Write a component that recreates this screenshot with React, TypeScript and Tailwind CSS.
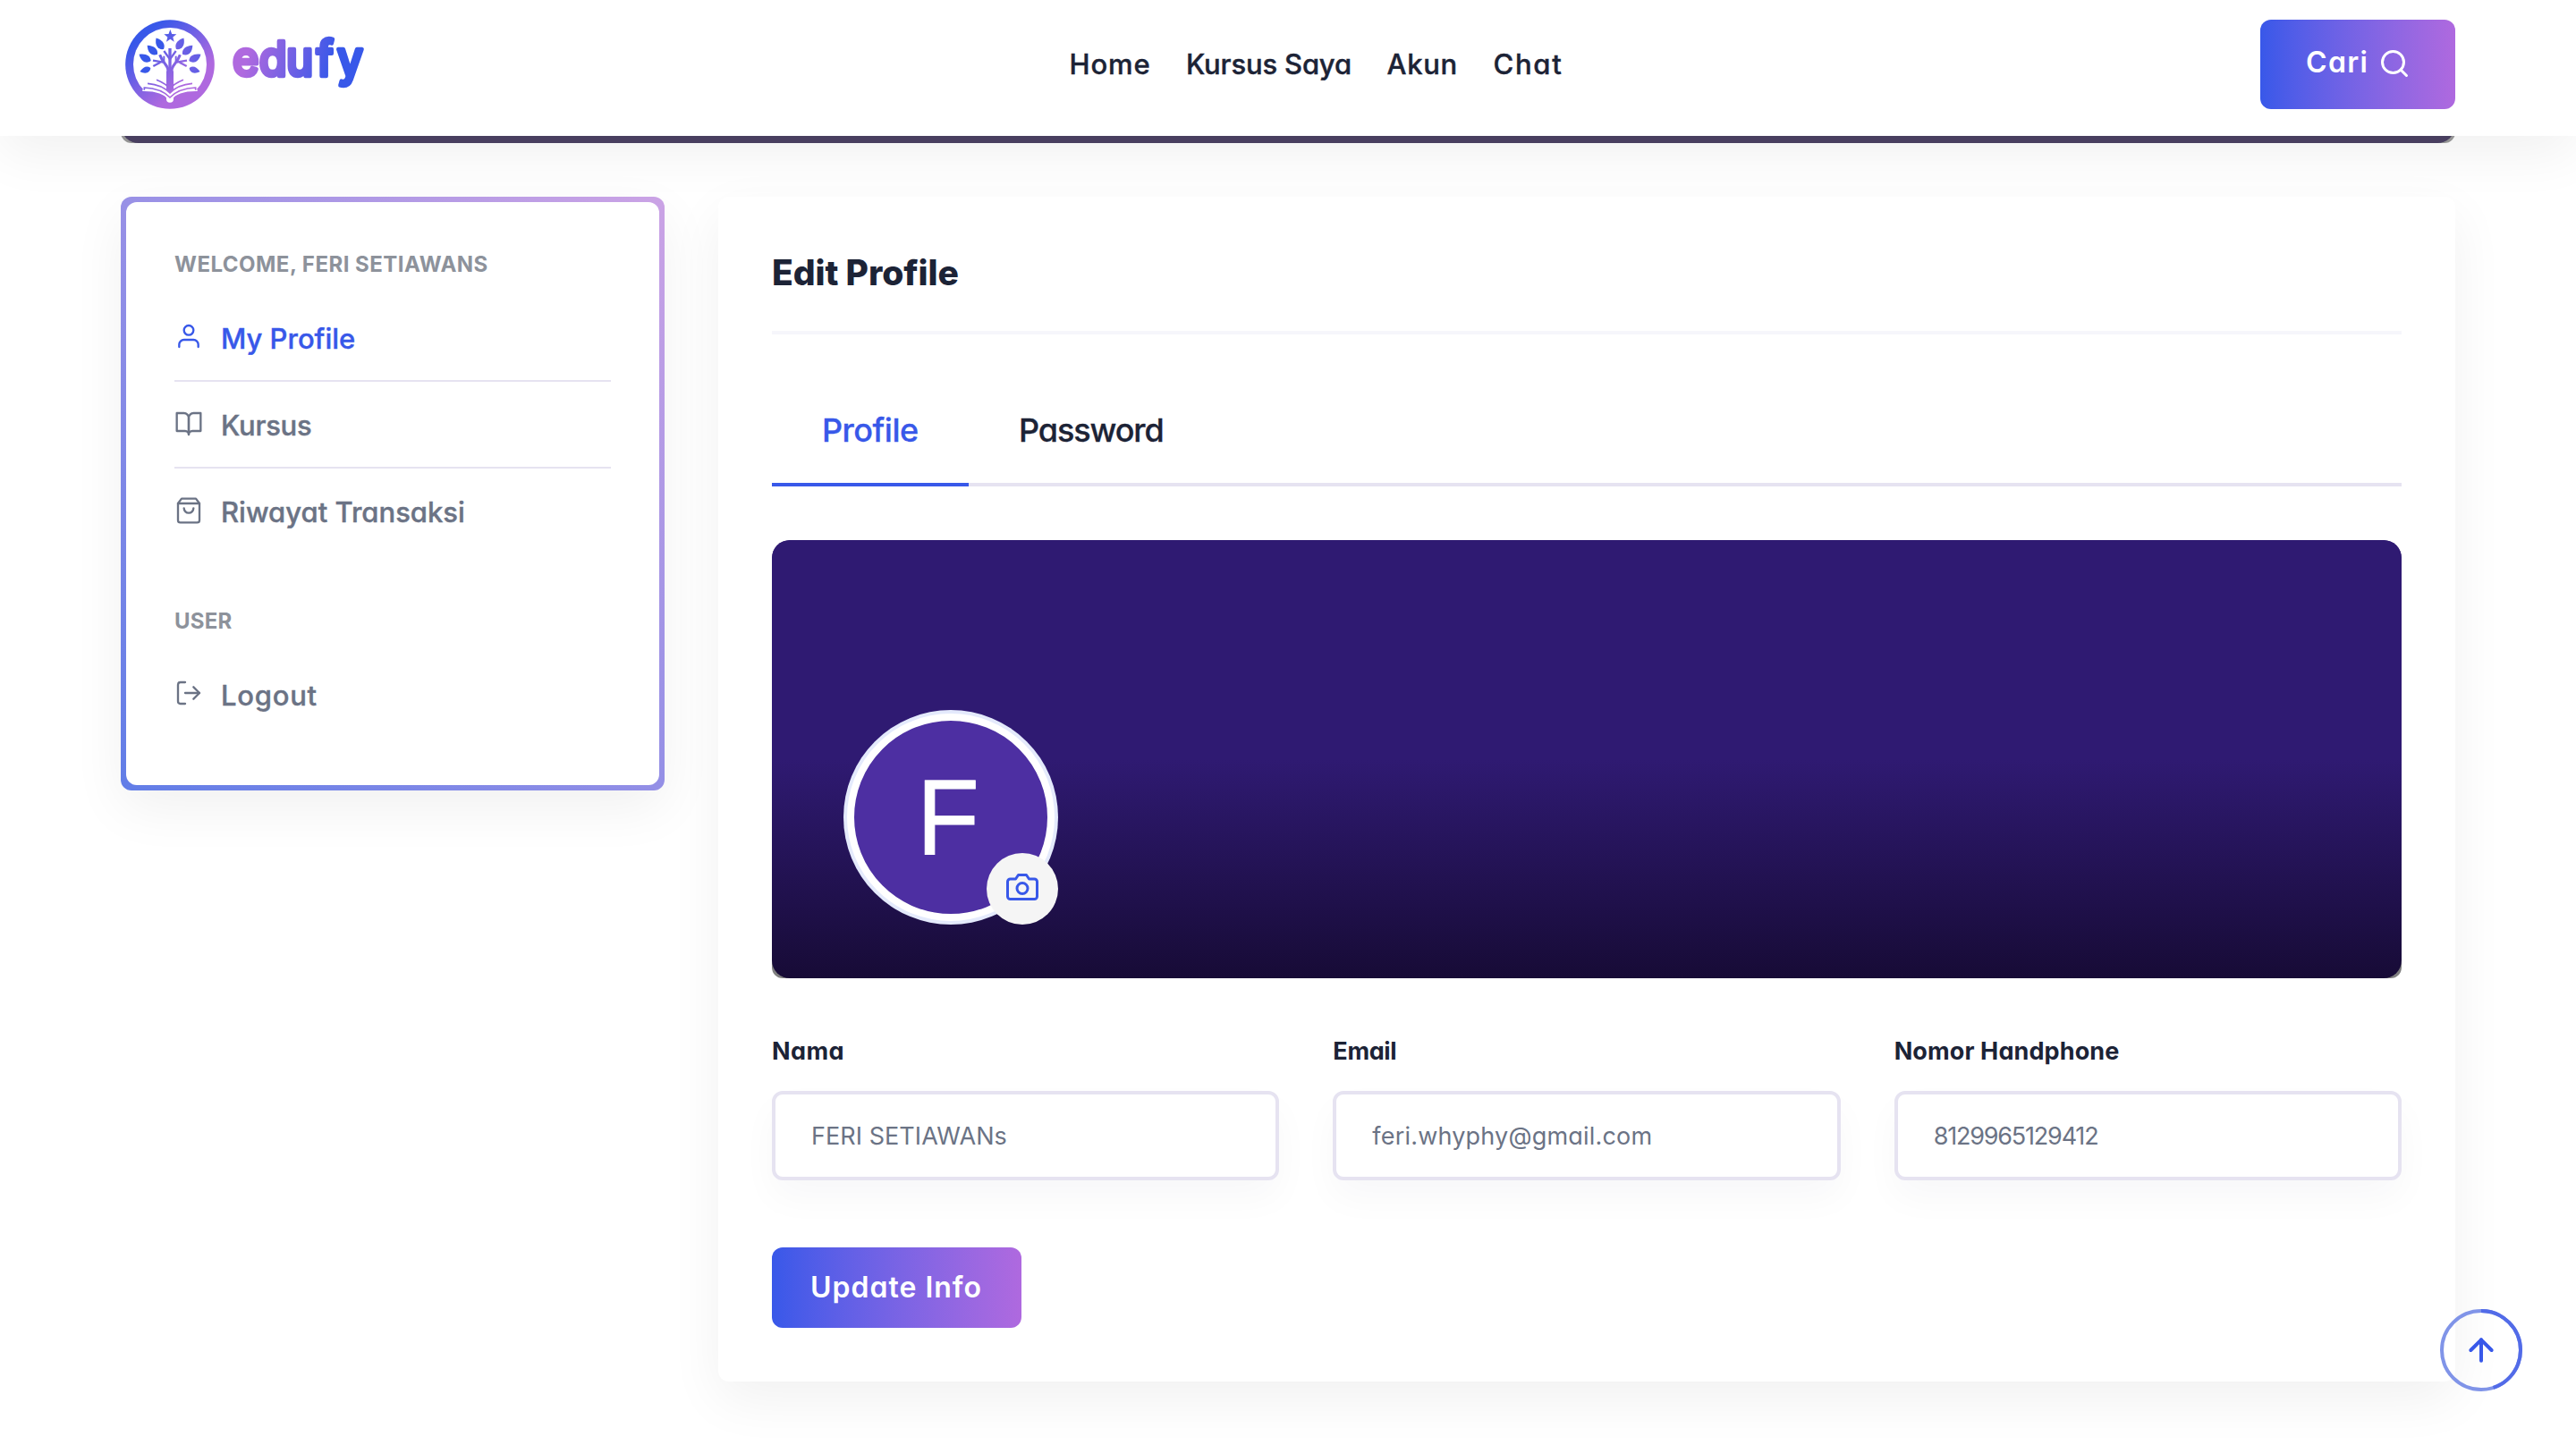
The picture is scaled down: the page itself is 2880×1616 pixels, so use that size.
import type { ReactNode } from "react";
import {
  FiArrowUp,
  FiBookOpen,
  FiCamera,
  FiLogOut,
  FiSearch,
  FiShoppingBag,
  FiUser,
} from "react-icons/fi";

const LEAF = "M0 0C7 -16 26 -20 45 0C26 15 9 14 0 0Z";

// Half of the logo's tree crown and branches; drawn twice, once mirrored.
function TreeHalf({ paint }: { paint: string }) {
  return (
    <g fill={paint}>
      <path d={LEAF} transform="translate(189 165) rotate(-124)" />
      <path d={LEAF} transform="translate(168 182) rotate(-139)" />
      <path d={LEAF} transform="translate(146 204) rotate(-151)" />
      <path d={LEAF} transform="translate(145 228) rotate(161) scale(.84)" />
      <g fill="none" stroke={paint} strokeLinecap="butt">
        <path d="M210 199L190 171" strokeWidth="7" />
        <path d="M205 240C204 216 186 214 176 184" strokeWidth="9" />
        <path d="M188 209L153 203" strokeWidth="7" />
        <path d="M178 209L154 222" strokeWidth="7" />
        <path d="M190 206V188" strokeWidth="6" />
      </g>
    </g>
  );
}

function Logo() {
  return (
    <div className="flex items-center">
      <svg className="size-[100px]" viewBox="60 66 300 300">
        <defs>
          <linearGradient id="mark" gradientUnits="userSpaceOnUse" x1="115" y1="125" x2="255" y2="290">
            <stop offset="0" stopColor="#3858e9" />
            <stop offset="1" stopColor="#af69df" />
          </linearGradient>
          <linearGradient id="mark-mirrored" gradientUnits="userSpaceOnUse" x1="305" y1="125" x2="165" y2="290">
            <stop offset="0" stopColor="#3858e9" />
            <stop offset="1" stopColor="#af69df" />
          </linearGradient>
        </defs>
        <g fill="url(#mark)">
          <circle cx="210" cy="216" r="149.500" />
          <circle cx="210" cy="216" r="123" fill="#fff" />
          <path d="M211 99L216.500 114L232 114.500L220 124.500L224 140L211 131L198 140L202 124.500L190 114.500L205.500 114Z" />
          <TreeHalf paint="url(#mark)" />
          <g transform="translate(420 0) scale(-1 1)">
            <TreeHalf paint="url(#mark-mirrored)" />
          </g>
          <path d="M205 162H215V225L222 240V300L210 312L198 300V240L205 225Z" />
          <path d="M106 288L118 304C160 303 188 312 198 328A12 12 0 0 0 222 328C232 312 260 303 302 304L314 288A126 126 0 0 1 106 288Z" />
          <circle cx="210" cy="332" r="12" fill="#fff" />
        </g>
        <g fill="none" stroke="#fff" strokeWidth="6">
          <path d="M118 303C165 302 194 314 210 334C226 314 255 302 302 303" />
        </g>
        <g fill="none" stroke="url(#mark)" strokeWidth="5">
          <path d="M124 302V294C165 296 192 308 210 327C228 308 255 296 296 294V302" />
          <path d="M135 280C170 283 194 295 210 312C226 295 250 283 285 280" />
          <path d="M165 268C185 276 202 286 210 300C218 286 235 276 255 268" />
        </g>
      </svg>
      <svg className="ml-4 h-[80px] w-[160px]" viewBox="256 32 160 80">
        <defs>
          <linearGradient id="word" gradientUnits="userSpaceOnUse" x1="285" y1="62" x2="396" y2="90">
            <stop offset="0.1" stopColor="#af69df" />
            <stop offset="1" stopColor="#3858e9" />
          </linearGradient>
        </defs>
        <text
          x="279.500 311.500 344 380.500 405.500"
          y="85.500"
          transform="scale(.93 1)"
          fill="url(#word)"
          stroke="url(#word)"
          strokeWidth="4.500"
          strokeLinejoin="round"
          className="text-[54px] font-medium"
        >
          edufy
        </text>
      </svg>
    </div>
  );
}

function Header() {
  return (
    <header className="relative z-10 flex h-[152px] items-start justify-between bg-white pt-[22px] pr-[135px] pl-[140px] shadow-[0_20px_60px_rgba(0,0,0,0.06)]">
      <Logo />
      <nav className="mt-[34px] ml-[2px] flex flex-1 justify-center text-[31px] leading-[31px] font-medium text-[#1c2336] [-webkit-text-stroke:0.4px]">
        <a className="w-[130.500px] tracking-[0.880px]">Home</a>
        <a className="w-[224.500px] tracking-[-0.170px]">Kursus Saya</a>
        <a className="w-[119px] tracking-[0.680px]">Akun</a>
        <a className="w-[80px] tracking-[1.700px]">Chat</a>
      </nav>
      <button className="flex h-[100px] w-[218px] items-start rounded-xl bg-linear-to-r from-[#3858e9] to-[#af69df] pl-[51px] text-white">
        <span className="mt-[32px] w-[81px] text-left text-[32px] leading-[32px] font-semibold tracking-[1.300px]">Cari</span>
        <FiSearch className="mt-[31px] size-[36px]" />
      </button>
    </header>
  );
}

function MenuItem({ icon, label, tone }: { icon: ReactNode; label: string; tone: string }) {
  return (
    <a className={`flex h-[97px] items-center text-[31px] leading-[31px] font-medium ${tone}`}>
      <span className="mb-1 w-[52px] text-[32px]">{icon}</span>
      <span className="[-webkit-text-stroke:0.4px]">{label}</span>
    </a>
  );
}

function Sidebar() {
  return (
    <aside className="h-[664px] w-[608px] rounded-xl bg-linear-[45deg,#617de7,#cba3e5] p-[6px] shadow-[0_20px_60px_rgba(0,0,0,0.06)]">
      <div className="h-full rounded-xl bg-white px-[54px] pt-[58px]">
        <h6 className="mb-[23px] text-[24px] leading-[24px] font-bold tracking-[0.480px] text-[#8d929b]">WELCOME, FERI SETIAWANS</h6>
        <MenuItem icon={<FiUser strokeWidth={1.75} />} label="My Profile" tone="h-[96px]! border-b-2 border-[#e6e3f1] text-[#3858e9]" />
        <MenuItem icon={<FiBookOpen strokeWidth={1.75} />} label="Kursus" tone="pt-[2px] border-b-2 border-[#e6e3f1] text-[#6b7385] tracking-[-0.250px]" />
        <MenuItem icon={<FiShoppingBag strokeWidth={1.75} />} label="Riwayat Transaksi" tone="text-[#6b7385]" />
        <h6 className="mt-[62px] mb-[22px] text-[24px] leading-[24px] font-bold tracking-[0.200px] text-[#8d929b]">USER</h6>
        <MenuItem icon={<FiLogOut strokeWidth={1.75} />} label="Logout" tone="h-[96px]! text-[#6b7385] tracking-[0.750px]" />
      </div>
    </aside>
  );
}

function Cover() {
  return (
    <div className="mt-[60px] h-[490px] overflow-hidden rounded-t-[20px] rounded-b-xl bg-[linear-gradient(180deg,#2f1a72_50%,#808080_50%)]">
      <div className="h-full rounded-[20px] bg-[linear-gradient(180deg,#2f1a72_0%,#2f1a72_50%,#170b36_100%)] pt-[190px] pl-[80px]">
        <div className="relative size-[240px] rounded-full bg-[#e4eafc] p-1">
          <div className="flex size-full items-center justify-center rounded-full border-8 border-white bg-[#4d2fa2]">
            <span className="mr-[7px] scale-x-95 font-['Liberation_Sans',sans-serif] text-[121px] leading-[120px] text-white [-webkit-text-stroke:0.8px]">F</span>
          </div>
          <button className="absolute right-0 bottom-0 flex size-[80px] items-center justify-center rounded-full bg-[#f5f5f5] text-[#3858e9]">
            <FiCamera className="mb-1 size-[36px]" />
          </button>
        </div>
      </div>
    </div>
  );
}

function Field({ label, value, labelTone, valueTone }: { label: string; value: string; labelTone: string; valueTone: string }) {
  return (
    <div>
      <div className={`text-[27px] leading-[28px] font-bold text-[#1c2336] ${labelTone}`}>{label}</div>
      <div className={`mt-[30px] flex h-[100px] items-center rounded-xl border-4 border-[#e6e3f1] bg-white pt-[2px] pl-[40px] text-[27px] text-[#6b7385] shadow-[0_20px_40px_rgba(20,20,60,0.03)] ${valueTone}`}>
        {value}
      </div>
    </div>
  );
}

function ProfilePanel() {
  return (
    <main className="h-[1325px] w-[1942px] rounded-xl bg-white px-[60px] pt-[60px] shadow-[0_20px_60px_rgba(0,0,0,0.06)]">
      <h4 className="h-[94px] border-b-4 border-[#f6f6fb] pt-[5px] text-[39px] leading-[39px] font-extrabold tracking-[-0.100px] text-[#1c2336]">Edit Profile</h4>
      <div className="mt-[50px] flex h-[120px] border-b-4 border-[#e6e3f1] text-[36px] leading-[36px] font-medium [-webkit-text-stroke:0.3px]">
        <div className="h-[120px] w-[220px] border-b-4 border-[#3858e9] pt-[39px] pl-[56px] tracking-[-0.500px] text-[#3858e9]">Profile</div>
        <div className="pt-[39px] pl-[56px] tracking-[-1.090px] text-[#1c2336]">Password</div>
      </div>
      <Cover />
      <div className="mt-[68px] grid grid-cols-3 gap-[60px]">
        <Field label="Nama" value="FERI SETIAWANs" labelTone="tracking-[0.400px]" valueTone="tracking-[0.060px]" />
        <Field label="Email" value="feri.whyphy@gmail.com" labelTone="tracking-[-0.350px]" valueTone="tracking-[0.190px]" />
        <Field label="Nomor Handphone" value="8129965129412" labelTone="tracking-[0.120px]" valueTone="tracking-[-1.200px]" />
      </div>
      <button className="mt-[75px] flex h-[90px] w-[279px] items-center rounded-xl bg-linear-to-r from-[#3858e9] to-[#af69df] pl-[43px] text-[32px] font-semibold tracking-[1px] text-white">
        Update Info
      </button>
    </main>
  );
}

function BackToTop() {
  return (
    <button className="absolute top-[1464px] left-[2728px] z-20 flex size-[92px] items-center justify-center text-[#3858e9]">
      <svg className="absolute inset-0 size-full -rotate-90" viewBox="0 0 92 92" fill="none" strokeWidth="4">
        <circle cx="46" cy="46" r="44" stroke="#8094e8" />
        <circle cx="46" cy="46" r="44" stroke="#526be8" pathLength="100" strokeDasharray="45 55" />
      </svg>
      <FiArrowUp className="size-[40px]" strokeWidth={2.4} />
    </button>
  );
}

export default function App() {
  return (
    <div className="relative h-[1616px] w-[2880px] overflow-hidden bg-white font-['Inter',sans-serif] [font-feature-settings:'cv11']">
      <Header />
      <div className="px-[135px]">
        <div className="flex h-[8px] items-end overflow-hidden">
          <div className="h-[60px] w-full shrink-0 overflow-hidden rounded-b-xl bg-[#9b9b9b]">
            <div className="h-full rounded-b-[20px] bg-[#4c4264]" />
          </div>
        </div>
        <div className="mt-[60px] flex items-start gap-[60px]">
          <Sidebar />
          <ProfilePanel />
        </div>
      </div>
      <BackToTop />
    </div>
  );
}
